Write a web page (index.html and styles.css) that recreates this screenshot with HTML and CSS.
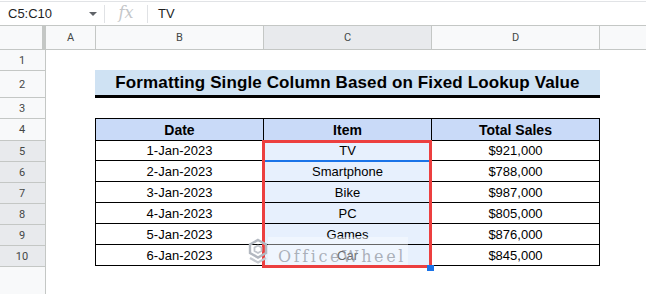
FILE: index.html
```html
<!DOCTYPE html>
<html>
<head>
<meta charset="utf-8">
<link rel="stylesheet" href="styles.css">
</head>
<body>
<div class="app">
  <div class="fbar">
    <div class="namebox"><span class="ref">C5:C10</span><span class="caret"></span></div>
    <div class="sep"></div>
    <div class="fx">fx</div>
    <div class="sep"></div>
    <div class="ftext">TV</div>
  </div>
  <div class="colheads">
    <div class="corner"></div>
    <div class="ch cha">A</div>
    <div class="ch chb">B</div>
    <div class="ch chc sel">C</div>
    <div class="ch chd">D</div>
    <div class="ch che"></div>
  </div>
  <div class="sheet">
    <div class="rowheads">
      <div class="rh h21">1</div>
      <div class="rh h27">2</div>
      <div class="rh h21">3</div>
      <div class="rh h22">4</div>
      <div class="rh h21 sel">5</div>
      <div class="rh h21 sel">6</div>
      <div class="rh h21 sel">7</div>
      <div class="rh h21 sel">8</div>
      <div class="rh h21 sel">9</div>
      <div class="rh h21 sel">10</div>
      <div class="rh rest"></div>
    </div>
    <div class="content">
      <div class="title">Formatting Single Column Based on Fixed Lookup Value</div>
      <div class="tablewrap">
        <div class="table">
          <div class="th">Date</div><div class="th">Item</div><div class="th">Total Sales</div>
          <div class="td">1-Jan-2023</div><div class="td pick">TV</div><div class="td">$921,000</div>
          <div class="td">2-Jan-2023</div><div class="td pick">Smartphone</div><div class="td">$788,000</div>
          <div class="td">3-Jan-2023</div><div class="td pick">Bike</div><div class="td">$987,000</div>
          <div class="td">4-Jan-2023</div><div class="td pick">PC</div><div class="td">$805,000</div>
          <div class="td">5-Jan-2023</div><div class="td pick">Games</div><div class="td">$876,000</div>
          <div class="td">6-Jan-2023</div><div class="td pick">Car</div><div class="td">$845,000</div>
        </div>
        <div class="active"></div>
        <div class="redbox"></div>
        <div class="handle"></div>
        <div class="watermark">
          <svg class="wlogo" width="20" height="34" viewBox="0 0 20 34">
            <path d="M10 3 L18 7.5 L18 16 L10 20.5 L2 16 L2 7.5 Z" fill="none" stroke="#b3b8c0" stroke-width="2.4"/>
            <path d="M10 8.5 L13.5 10.5 L13.5 14 L10 16 L6.5 14 L6.5 10.5 Z" fill="none" stroke="#c0c4cb" stroke-width="1.8"/>
            <path d="M2 21 L10 25.5 L18 21" fill="none" stroke="#c6cad0" stroke-width="2.2"/>
          </svg>
          <span class="wtext">OfficeWheel</span>
        </div>
      </div>
    </div>
  </div>
</div>
</body>
</html>
```

FILE: styles.css
```css
* { box-sizing: border-box; }
html, body { margin: 0; padding: 0; background: #fff; }
body { width: 646px; height: 294px; overflow: hidden; font-family: "Liberation Sans", Arial, sans-serif; }

.app { width: 646px; height: 294px; display: flex; flex-direction: column; }

.fbar {
  margin-top: 1px;
  border-top: 1px solid #e1e3e6;
  height: 24px;
  flex: none;
  display: flex;
  align-items: center;
  background: #fff;
}
.namebox { width: 104px; display: flex; align-items: center; padding-left: 8px; }
.ref { font-size: 13px; color: #1f1f1f; flex: 1; }
.caret {
  width: 0; height: 0;
  border-left: 4px solid transparent;
  border-right: 4px solid transparent;
  border-top: 4px solid #5f6368;
  margin-right: 7px;
}
.sep { width: 1px; height: 18px; background: #e0e2e5; }
.fx {
  width: 42px;
  text-align: center;
  font-family: "DejaVu Serif", "Liberation Serif", serif;
  font-style: italic;
  font-size: 16px;
  color: #c4c6c9;
  margin-top: -2px;
}
.ftext { padding-left: 10px; font-size: 13px; color: #1f1f1f; }

.colheads {
  flex: none;
  height: 25px;
  display: flex;
  border-top: 1px solid #c4c7c5;
  border-bottom: 1px solid #c4c7c5;
  background: #f8f9fa;
}
.corner { width: 46px; border-right: 4px solid #c4c7c5; background: #f8f9fa; }
.ch {
  border-right: 1px solid #c4c7c5;
  display: flex;
  align-items: center;
  justify-content: center;
  font-family: Roboto, "Liberation Sans", sans-serif;
  font-size: 11px;
  color: #444746;
}
.ch.sel { background: #e8eaed; }
.cha { width: 50px; }
.chb { width: 168px; }
.chc { width: 168px; }
.chd { width: 168px; }
.che { flex: 1; border-right: none; }

.sheet { flex: 1; display: flex; }
.rowheads { width: 46px; display: flex; flex-direction: column; border-right: 1px solid #c4c7c5; }
.rh {
  background: #f8f9fa;
  border-bottom: 1px solid #c4c7c5;
  display: flex;
  align-items: center;
  justify-content: center;
  font-family: Roboto, "Liberation Sans", sans-serif;
  font-size: 11px;
  color: #444746;
  padding-right: 1px;
}
.rh.sel { background: #e8eaed; }
.h21 { height: 21px; }
.h22 { height: 22px; }
.h27 { height: 27px; }
.rest { flex: 1; border-bottom: none; }

.content { flex: 1; padding-left: 49px; }

.title {
  margin-top: 20px;
  width: 505px;
  height: 28px;
  background: #cfe2f3;
  border-bottom: 3px solid #000;
  display: flex;
  align-items: center;
  justify-content: center;
  font-weight: bold;
  font-size: 17px;
  letter-spacing: 0.12px;
  color: #000;
  padding-top: 1px;
}

.tablewrap { position: relative; margin-top: 20px; width: 505px; }
.table {
  display: grid;
  grid-template-columns: 168px 168px 168px;
  grid-auto-rows: 21px;
  border-left: 1px solid #000;
  border-top: 1px solid #000;
}
.th, .td {
  border-right: 1px solid #000;
  border-bottom: 1px solid #000;
  display: flex;
  align-items: center;
  justify-content: center;
  color: #000;
  padding-top: 1px;
}
.th { background: #c9daf8; font-weight: bold; font-size: 14px; height: 22px; }
.td { font-size: 13px; }
.td.pick { background: #e7f0fd; }

.active {
  position: absolute;
  left: 168px;
  top: 22px;
  width: 169px;
  height: 22px;
  border-bottom: 2px solid #1a73e8;
}
.redbox {
  position: absolute;
  left: 167px;
  top: 22px;
  width: 170px;
  height: 128px;
  border: 3px solid #ec3f3f;
}
.handle {
  position: absolute;
  left: 332px;
  top: 147px;
  width: 7px;
  height: 6px;
  background: #1a73e8;
}
.watermark {
  position: absolute;
  left: 153px;
  top: 117px;
  height: 34px;
  display: flex;
  align-items: flex-start;
}
.wlogo { flex: none; margin-top: 2px; }
.wtext {
  margin-left: 0;
  margin-top: 2px;
  height: 28px;
  padding: 10px 2px 0 10px;
  background: rgba(255, 255, 255, 0.4);
  display: flex;
  align-items: center;
  font-family: "DejaVu Serif", "Liberation Serif", serif;
  font-size: 16px;
  letter-spacing: 2.6px;
  color: rgba(140, 145, 155, 0.7);
}
```
